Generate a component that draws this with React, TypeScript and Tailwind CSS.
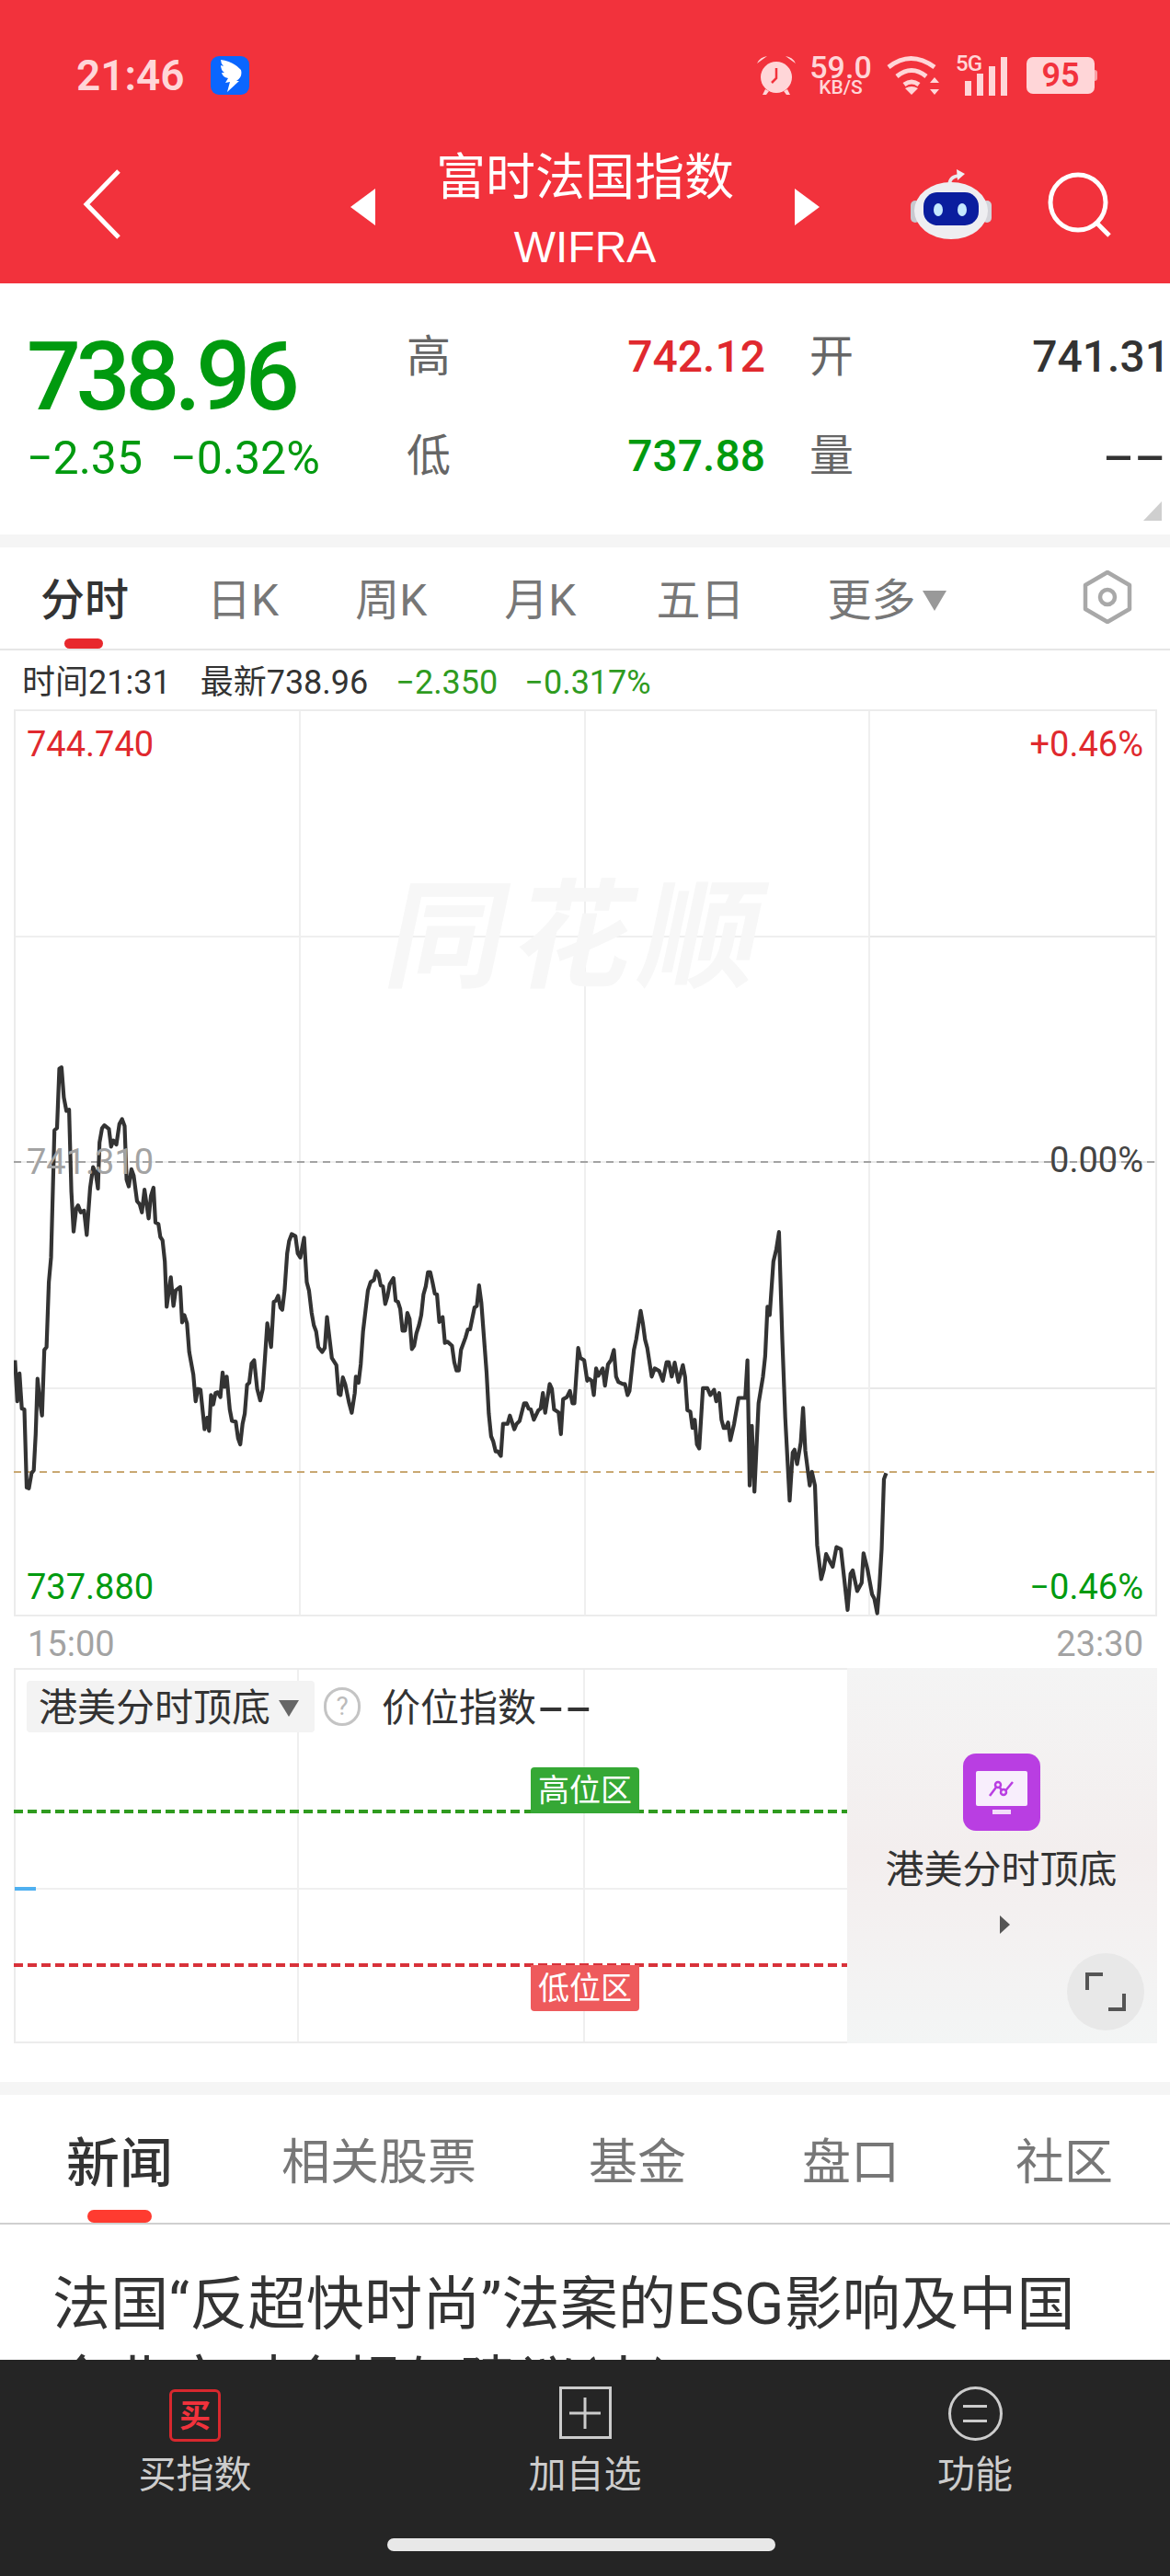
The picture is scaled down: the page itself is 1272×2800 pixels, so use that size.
const leftPts = [
  40,850,46,950,52,882,58,968,65,970,71,1160,77,1162,84,1125,90,1118,95,1030,100,895,106,950,112,985,118,825,124,818,130,660,136,600,145,290,152,285,158,140,164,137,170,210,177,243,184,240,190,440,196,537,203,480,208,473,215,490,224,486,231,545,240,430,248,380,255,395,261,432,265,320,272,285,278,278,290,287,296,330,302,315,310,325,318,275,325,263,332,280,337,410,343,427,350,385,356,400,365,463,372,470,378,490,385,435,396,505,402,450,409,430,414,515,422,518,427,550,433,558,439,610,444,720,455,648,462,718,468,680,480,672,485,758,491,740,498,760,504,830,515,885,521,950,527,920,534,922,545,1018,552,990,557,1022,562,935,568,958,574,930,580,928,587,940,593,880,598,915,604,890,612,970,618,998,628,1000,634,1040,640,1055,646,1005,652,980,658,910,664,905,670,858,677,850,685,920,693,948,700,920,706,840,712,760,722,818,729,708,735,705,741,693,747,722,752,727,758,680,765,590,770,560,777,543,787,548,793,590,800,600,810,552,817,660,823,680,830,735,836,765,842,780,848,818,858,830,865,820,871,745,878,800,884,845,896,862,902,932,907,935,913,892,920,910,930,955,937,978,945,930,948,890,955,905,961,860,967,780,980,680,987,660,996,655,1002,633,1008,640,1014,668,1020,670,1026,713,1032,695,1038,665,1048,650,1054,705,1060,708,1066,725,1072,778,1079,778,1085,735,1091,750,1097,823,1103,815,1109,785,1116,765,1122,740,1128,690,1134,670,1140,636,1146,636,1152,660,1158,688,1164,690,1170,757,1179,745,1185,808,1192,805,1204,815,1210,855,1216,875,1222,875,1228,825,1240,795,1246,775,1252,775,1264,722,1270,718,1276,668,1282,710,1296,880,1302,980,1308,1035,1314,1048,1320,1072,1326,1072,1334,1083,1340,1005,1352,1005,1358,985,1370,1018,1376,1005,1384,998,1396,955,1402,955,1408,968,1414,970,1422,995,1434,972,1440,968,1446,930,1452,978,1464,908,1470,920,1476,970,1488,977,1494,1030,1500,945,1510,940,1518,925,1525,955,1530,955,1540,820,1546,845,1556,850,1564,900,
];
const rightPts = [
  0,895,8,900,14,935,20,870,26,888,38,870,44,912,52,860,60,850,68,825,74,890,80,903,92,908,98,908,105,935,110,925,122,825,128,800,140,730,146,760,152,800,158,820,170,890,178,870,190,876,200,900,210,855,216,855,224,890,232,856,242,903,254,862,260,890,266,972,274,975,280,1015,286,995,292,1055,298,1065,308,918,320,918,328,935,338,922,344,950,352,930,358,995,364,1015,370,1015,376,1002,382,1045,392,1005,404,942,422,942,428,850,434,1155,440,1010,447,1170,458,955,470,890,476,840,482,720,488,740,498,610,506,580,513,538,522,800,530,990,542,1192,550,1075,555,1068,562,1103,572,1050,578,966,584,1070,596,1155,602,1122,610,1155,616,1300,627,1383,634,1360,640,1322,650,1340,658,1353,668,1305,680,1310,690,1390,698,1458,706,1370,712,1362,724,1412,736,1392,741,1320,752,1360,764,1420,770,1430,778,1466,784,1400,790,1310,796,1140,802,1125,
];

// traced points -> chart box coords (box starts at 15,772)
function toPath() {
  const out: string[] = [];
  for (let i = 0; i < leftPts.length; i += 2) {
    out.push(`${(leftPts[i] / 2.45 - 15).toFixed(1)},${(1100 + leftPts[i + 1] / 2.24 - 772).toFixed(1)}`);
  }
  for (let i = 0; i < rightPts.length; i += 2) {
    out.push(`${(640 + rightPts[i] / 2.48 - 15).toFixed(1)},${(1100 + rightPts[i + 1] / 2.24 - 772).toFixed(1)}`);
  }
  return 'M' + out.join('L');
}

function StatusIcons() {
  return (
    <div className="flex items-center text-[#ffd6d8]">
      <svg width="44" height="44" viewBox="0 0 44 44" className="mr-[15px]">
        <circle cx="22" cy="24" r="17" fill="#ffd6d8" />
        <path d="M22 14v11l-5 5" stroke="#f2323c" strokeWidth="2.5" fill="none" />
        <path d="M1 9q3-7 11-8zM43 9q-3-7-11-8z" fill="#ffd6d8" />
        <path d="M10 37l-3 6h4l3-4zM34 37l3 6h-4l-3-4z" fill="#ffd6d8" />
      </svg>
      <div className="mr-[17px] flex w-[66px] flex-col items-center font-medium">
        <span className="text-[34px] leading-[26px]">59.0</span>
        <span className="text-[21px] leading-[18px]">KB/S</span>
      </div>
      <svg width="58" height="44" viewBox="0 0 58 44" className="mr-[17px]" fill="none" stroke="#ffd6d8" strokeWidth="5">
        <path d="M2 13q24-19 50 0" />
        <path d="M11 23q16-13 32 0" />
        <path d="M19 32q8-6 16 0" />
        <path d="M27 43l-7-7q7-4 14 0z" fill="#ffd6d8" stroke="none" />
        <path d="M52 24l5 6H47zM52 43l5-6H47z" fill="#ffd6d8" stroke="none" />
      </svg>
      <div className="relative mr-[21px] h-[44px] w-[56px]">
        <span className="absolute left-0 top-[-3px] text-[24px] leading-[24px] font-medium tracking-[-1px]">5G</span>
        <div className="absolute bottom-0 right-0 flex items-end gap-[6px]">
          <div className="h-[16px] w-[7px] bg-[#ffd6d8]" />
          <div className="h-[24px] w-[7px] bg-[#ffd6d8]" />
          <div className="h-[32px] w-[7px] bg-[#ffd6d8]" />
          <div className="h-[42px] w-[7px] bg-[#ffd6d8]" />
        </div>
      </div>
      <div className="flex items-center">
        <div className="flex h-[40px] w-[74px] items-center justify-center rounded-[7px] bg-[#ffd6d8] text-[36px] font-semibold text-[#f2323c]">95</div>
        <div className="h-[12px] w-[3px] rounded-r bg-[#f9a0a4]" />
      </div>
    </div>
  );
}

function RobotIcon() {
  return (
    <svg width="88" height="78" viewBox="0 0 88 78">
      <path d="M42 20q0-10 10-11" stroke="#e8e8ec" strokeWidth="3.5" fill="none" />
      <path d="M50 2l9 5-8 7z" fill="#f0f0f3" />
      <rect x="0" y="36" width="10" height="24" rx="5" fill="#c8c8ce" />
      <rect x="78" y="36" width="10" height="24" rx="5" fill="#d4d4da" />
      <ellipse cx="44" cy="47" rx="40" ry="31" fill="#eeeef1" />
      <rect x="14" y="27" width="60" height="36" rx="15" fill="#0a1d9e" />
      <ellipse cx="30" cy="46" rx="5" ry="7" fill="#c4e8ff" />
      <ellipse cx="56" cy="46" rx="5" ry="7" fill="#c4e8ff" />
    </svg>
  );
}

const tabClass = 'text-[48px] leading-none text-[#777]';
const newsClass = 'text-[53px] leading-none text-[#777]';
const chartLabel = 'absolute text-[38px] leading-[40px]';

export default function App() {
  return (
    <div className="flex h-[2800px] w-[1272px] flex-col overflow-hidden bg-white font-[Roboto,'Noto_Sans_CJK_SC',sans-serif]">
      <header className="h-[308px] shrink-0 bg-[#f2323c]">
        <div className="flex items-center justify-between pl-[83px] pr-[79px] pt-[59px]">
          <div className="flex items-center gap-[28px]">
            <span className="text-[46px] leading-[46px] font-semibold text-[#ffd6d8]">21:46</span>
            <svg width="42" height="42" viewBox="0 0 42 42">
              <rect width="42" height="42" rx="9" fill="#0a66ff" />
              <path d="M11 4q14 2 22 11q2 8-5 12l3 0-13 12 3-11-5 1 3-5q-6-1-7-6l3 0q-4-3-4-8l3 1q-3-3-3-7z" fill="#fff" />
            </svg>
          </div>
          <StatusIcons />
        </div>
        <div className="grid grid-cols-[381px_510px_381px] pt-[52px]">
          <div className="pl-[88px] pt-[27px]">
            <svg width="44" height="76" viewBox="0 0 44 76" fill="none" stroke="#fff" strokeWidth="5">
              <path d="M41 2L6 38l35 36" />
            </svg>
          </div>
          <div className="flex items-start justify-between">
            <svg width="27" height="40" viewBox="0 0 27 40" className="mt-[48px]"><path d="M27 0v40L0 20z" fill="#fff" /></svg>
            <div className="flex flex-col items-center">
              <span className="text-[54px] leading-[74px] text-white">富时法国指数</span>
              <span className="mt-[8px] font-['Liberation_Sans',sans-serif] text-[48px] leading-[60px] text-white">WIFRA</span>
            </div>
            <svg width="27" height="40" viewBox="0 0 27 40" className="mt-[48px]"><path d="M0 0v40l27-20z" fill="#fff" /></svg>
          </div>
          <div className="flex items-start gap-[61px] pl-[99px] pt-[25px]">
            <RobotIcon />
            <svg width="72" height="72" viewBox="0 0 72 72" className="mt-[5px]" fill="none" stroke="#fff" strokeWidth="5">
              <circle cx="33" cy="33" r="30" />
              <path d="M53 55l14 14" />
            </svg>
          </div>
        </div>
      </header>

      <section className="relative flex h-[273px] shrink-0">
        <div className="flex w-[442px] flex-col pl-[29px] pt-[49px]">
          <span className="text-[104px] leading-[106px] font-medium tracking-[-5.5px] text-[#009a0f]">738.96</span>
          <div className="mt-[5px] flex gap-[30px] text-[50px] leading-[60px] text-[#009a0f]">
            <span>−2.35</span>
            <span>−0.32%</span>
          </div>
        </div>
        <div className="grid flex-1 grid-cols-[48px_342px_96px_1fr] grid-rows-[108px_108px] pt-[26px] text-[48px] leading-[108px]">
          <span className="text-[#666]">高</span>
          <span className="text-right font-medium text-[#e0292e]">742.12</span>
          <span className="pl-[48px] text-[#666]">开</span>
          <span className="text-right font-medium text-[#333]">741.31</span>
          <span className="text-[#666]">低</span>
          <span className="text-right font-medium text-[#009a0f]">737.88</span>
          <span className="pl-[48px] text-[#666]">量</span>
          <span className="pr-[4px] text-right text-[#333]">
            <span className="inline-block origin-right scale-x-[2.1] font-medium">--</span>
          </span>
        </div>
        <svg width="20" height="21" viewBox="0 0 20 21" className="absolute bottom-[15px] right-[9px]"><path d="M20 0v21H0z" fill="#cfcfcf" /></svg>
      </section>
      <div className="h-[14px] shrink-0 bg-[#f5f5f5]" />

      <nav className="relative flex h-[112px] shrink-0 items-center border-b-2 border-[#e6e6e6] pl-[44px] pt-[5px]">
        <span className="mr-[85px] text-[48px] leading-none font-medium text-[#333]">分时</span>
        <span className={`mr-[83px] ${tabClass}`}>日K</span>
        <span className={`mr-[84px] ${tabClass}`}>周K</span>
        <span className={`mr-[87px] ${tabClass}`}>月K</span>
        <span className={`mr-[90px] ${tabClass}`}>五日</span>
        <span className={tabClass}>更多</span>
        <svg width="26" height="22" viewBox="0 0 26 22" className="ml-[8px]"><path d="M0 0h26L13 22z" fill="#999" /></svg>
        <svg width="58" height="54" viewBox="0 0 58 54" className="ml-[146px] mt-[-8px] rotate-90" fill="none" stroke="#a8a8a8" strokeWidth="4.5">
          <path d="M16 3h26l14 24-14 24H16L2 27z" strokeLinejoin="round" />
          <circle cx="29" cy="27" r="8" />
        </svg>
        <div className="absolute bottom-0 left-[70px] h-[11px] w-[42px] rounded-t-full rounded-b-full bg-[#e8282d]" />
      </nav>

      <div className="flex h-[64px] shrink-0 items-center pl-[24px] pt-[5px] text-[36px] leading-none text-[#333]">
        <span className="mr-[32px]">时间21:31</span>
        <span className="mr-[30px]">最新738.96</span>
        <span className="mr-[29px] text-[#2f9b1f]">−2.350</span>
        <span className="text-[#2f9b1f]">−0.317%</span>
      </div>

      <div className="relative mx-[15px] h-[986px] w-[1243px] shrink-0 border-2 border-[#ececec]">
        <div className="grid h-full grid-cols-4 grid-rows-4">
          {Array.from({length: 16}).map((_, i) => (
            <div key={i} className={`${i % 4 !== 3 ? 'border-r-2 border-[#efefef]' : ''} ${i < 12 ? 'border-b-2 border-[#e8e8e8]' : ''}`} />
          ))}
        </div>
        <div className="absolute left-[407px] top-[182px] skew-x-[-12deg] text-[128px] leading-none font-bold tracking-[10px] text-[#f7f7f7]">同花顺</div>
        <svg width="1243" height="986" viewBox="0 0 1243 986" className="absolute left-[-2px] top-[-2px]" fill="none">
          <path d="M0 492H1243" stroke="#a3a3a3" strokeWidth="2" strokeDasharray="8 6" />
          <path d="M0 829H1243" stroke="#c9a872" strokeWidth="2" strokeDasharray="8 6" />
          <path d={toPath()} stroke="#333" strokeWidth="4.2" strokeLinejoin="round" />
        </svg>
        <span className={`${chartLabel} left-[12px] top-[16px] text-[#e0292e]`}>744.740</span>
        <span className={`${chartLabel} right-[13px] top-[16px] text-[#e0292e]`}>+0.46%</span>
        <span className={`${chartLabel} left-[12px] top-[470px] text-[#a3a3a3]`}>741.310</span>
        <span className={`${chartLabel} right-[13px] top-[468px] text-[#444]`}>0.00%</span>
        <span className={`${chartLabel} left-[12px] top-[932px] text-[#009a0f]`}>737.880</span>
        <span className={`${chartLabel} right-[13px] top-[932px] text-[#009a0f]`}>−0.46%</span>
      </div>

      <div className="flex h-[56px] shrink-0 items-center justify-between pl-[30px] pr-[29px] pt-[3px] text-[38px] leading-none text-[#a3a3a3]">
        <span>15:00</span>
        <span>23:30</span>
      </div>

      <div className="mx-[15px] flex h-[408px] w-[1243px] shrink-0">
        <div className="relative h-full w-[906px] border-b-2 border-l-2 border-t-2 border-[#ececec]">
          <div className="grid h-full grid-cols-[308px_311px_1fr] grid-rows-[239px_1fr]">
            <div className="border-b-2 border-r-2 border-[#efefef]" />
            <div className="border-b-2 border-r-2 border-[#efefef]" />
            <div className="border-b-2 border-[#efefef]" />
            <div className="border-r-2 border-[#efefef]" />
            <div className="border-r-2 border-[#efefef]" />
            <div />
          </div>
          <div className="absolute left-[12px] top-[12px] flex items-center">
            <div className="flex h-[56px] w-[313px] items-center rounded-[4px] bg-[#f3f3f3] pl-[13px] pt-[3px] text-[42px] leading-none text-[#333]">
              港美分时顶底
              <svg width="22" height="18" viewBox="0 0 22 18" className="ml-[9px]"><path d="M0 0h22L11 18z" fill="#666" /></svg>
            </div>
            <div className="ml-[10px] flex h-[42px] w-[40px] items-center justify-center rounded-full border-[3px] border-[#c4c4c4] text-[28px] leading-none text-[#bbb]">?</div>
            <span className="ml-[23px] pt-[3px] text-[42px] leading-none text-[#333]">
              价位指数
              <span className="ml-[1px] inline-block origin-left scale-x-[2.1] font-medium">--</span>
            </span>
          </div>
          <svg width="906" height="408" viewBox="0 0 906 408" className="absolute left-[-2px] top-[-2px]" fill="none">
            <path d="M0 156H906" stroke="#2f9b1f" strokeWidth="4" strokeDasharray="10 5" />
            <path d="M0 323H906" stroke="#d8323a" strokeWidth="4" strokeDasharray="10 5" />
            <path d="M1 240H24" stroke="#4fb0f0" strokeWidth="4" />
          </svg>
          <div className="absolute left-[560px] top-[106px] flex h-[50px] w-[118px] items-center justify-center rounded-t-[4px] bg-[#35a835] text-[34px] leading-none text-white">高位区</div>
          <div className="absolute left-[560px] top-[321px] flex h-[50px] w-[118px] items-center justify-center rounded-b-[4px] bg-[#ee5a5c] text-[34px] leading-none text-white">低位区</div>
        </div>
        <div className="relative flex h-full flex-1 flex-col items-center bg-linear-to-b from-[#f4f4f4] via-[#f3eeee] to-[#f3f5f5] pr-[2px] pt-[93px]">
          <div className="flex h-[84px] w-[84px] flex-col items-center rounded-[14px] bg-[#b93ee2] pt-[19px]">
            <div className="flex h-[38px] w-[56px] items-center justify-center rounded-[2px] bg-[#f8eefc]">
              <svg width="30" height="20" viewBox="0 0 30 20" fill="none" stroke="#b93ee2" strokeWidth="2.5">
                <path d="M2 18L11 6M11 6l6 9M17 15l10-12" />
                <circle cx="11" cy="6" r="3" fill="#f8eefc" />
                <circle cx="17" cy="14" r="3" fill="#f8eefc" />
              </svg>
            </div>
            <div className="mt-[4px] h-[5px] w-[20px] bg-[#f3dcfa]" />
          </div>
          <span className="mt-[17px] text-[42px] leading-[52px] text-[#333]">港美分时顶底</span>
          <svg width="11" height="20" viewBox="0 0 11 20" className="ml-[8px] mt-[23px]"><path d="M0 0l11 10L0 20z" fill="#555" /></svg>
          <div className="absolute bottom-[14px] right-[14px] flex h-[84px] w-[84px] items-center justify-center rounded-full bg-[#e8e8e8]">
            <svg width="44" height="44" viewBox="0 0 44 44" fill="none" stroke="#555" strokeWidth="4">
              <path d="M2 20V3h17" />
              <path d="M42 24v17H25" />
            </svg>
          </div>
        </div>
      </div>

      <div className="mt-[42px] h-[14px] shrink-0 bg-[#f5f5f5]" />

      <nav className="relative flex h-[141px] shrink-0 items-center border-b-2 border-[#d0d0d0] pl-[72px] pt-[10px]">
        <span className="mr-[118px] text-[58px] leading-none font-medium text-[#333]">新闻</span>
        <span className={`mr-[122px] ${newsClass}`}>相关股票</span>
        <span className={`mr-[126px] ${newsClass}`}>基金</span>
        <span className={`mr-[126px] ${newsClass}`}>盘口</span>
        <span className={newsClass}>社区</span>
        <div className="absolute bottom-0 left-[95px] h-[14px] w-[70px] rounded-full bg-[#ff3b30]" />
      </nav>

      <div className="min-h-0 flex-1 overflow-hidden pl-[57px] pt-[44px] text-[63px] leading-[86px] tracking-[0.3px] text-[#333]">
        法国“反超快时尚”法案的ESG影响及中国<br />
        企业应对合规与建议(上)
      </div>

      <footer className="flex h-[235px] shrink-0 flex-col bg-[#252525]">
        <div className="grid grid-cols-3 pt-[29px]">
          <div className="flex flex-col items-center">
            <div className="mt-[3px] flex h-[57px] w-[56px] items-center justify-center rounded-[6px] border-[3px] border-[#d8282e] text-[34px] leading-none font-bold text-[#f2323c]">买</div>
            <span className="mt-[12px] text-[41px] leading-[48px] text-[#ccc]">买指数</span>
          </div>
          <div className="flex flex-col items-center">
            <div className="relative flex h-[57px] w-[57px] items-center justify-center border-[3px] border-[#ccc]">
              <svg width="34" height="34" viewBox="0 0 34 34" stroke="#ccc" strokeWidth="3"><path d="M17 0v34M0 17h34" /></svg>
            </div>
            <span className="mt-[15px] text-[41px] leading-[48px] text-[#ccc]">加自选</span>
          </div>
          <div className="flex flex-col items-center">
            <div className="flex h-[59px] w-[59px] flex-col items-center justify-center gap-[13px] rounded-full border-[3px] border-[#ccc]">
              <div className="h-[3px] w-[26px] bg-[#ccc]" />
              <div className="h-[3px] w-[26px] bg-[#ccc]" />
            </div>
            <span className="mt-[13px] text-[41px] leading-[48px] text-[#ccc]">功能</span>
          </div>
        </div>
        <div className="ml-[421px] mt-[45px] h-[14px] w-[422px] rounded-full bg-[#e8e8e8]" />
      </footer>
    </div>
  );
}
